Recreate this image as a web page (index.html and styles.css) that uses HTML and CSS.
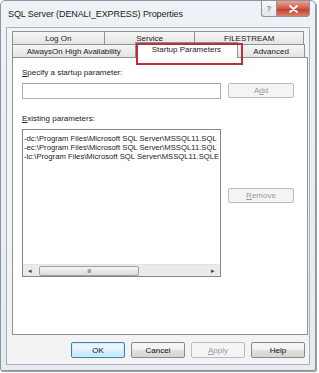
FILE: index.html
```html
<!DOCTYPE html>
<html>
<head>
<meta charset="utf-8">
<link rel="stylesheet" href="styles.css">
</head>
<body>
<div class="window">
  <div class="titlebar">
    <span class="title">SQL Server (DENALI_EXPRESS) Properties</span>
    <div class="caption-btns">
      <div class="cbtn help">?</div>
      <div class="cbtn close">
        <svg width="9" height="8" viewBox="0 0 9 8"><path d="M1 1 L8 7 M8 1 L1 7" stroke="#fff" stroke-width="1.8" stroke-linecap="round"/></svg>
      </div>
    </div>
  </div>
  <div class="client">
    <div class="tabs">
      <div class="tabrow row1">
        <div class="tab t-logon">Log On</div>
        <div class="tab t-service">Service</div>
        <div class="tab t-fs">FILESTREAM</div>
      </div>
      <div class="tabrow row2">
        <div class="tab t-always">AlwaysOn High Availability</div>
        <div class="tab t-startup active">Startup Parameters</div>
        <div class="tab t-adv">Advanced</div>
      </div>
      <div class="highlight"></div>
    </div>
    <div class="panel">
      <div class="label"><u>S</u>pecify a startup parameter:</div>
      <div class="row">
        <div class="input"></div>
        <div class="btn disabled"><span>A<u>d</u>d</span></div>
      </div>
      <div class="label label2"><u>E</u>xisting parameters:</div>
      <div class="row row-list">
        <div class="listbox">
          <div class="items">
            <div>-dc:\Program Files\Microsoft SQL Server\MSSQL11.SQL</div>
            <div>-ec:\Program Files\Microsoft SQL Server\MSSQL11.SQL</div>
            <div>-lc:\Program Files\Microsoft SQL Server\MSSQL11.SQLE</div>
          </div>
          <div class="hscroll">
            <div class="arrow">&#9666;</div>
            <div class="track"><div class="thumb">III</div></div>
            <div class="arrow">&#9656;</div>
          </div>
        </div>
        <div class="side">
          <div class="btn disabled"><span><u>R</u>emove</span></div>
        </div>
      </div>
    </div>
    <div class="footer">
      <div class="btn default">OK</div>
      <div class="btn">Cancel</div>
      <div class="btn disabled"><span><u>A</u>pply</span></div>
      <div class="btn">Help</div>
    </div>
  </div>
</div>
</body>
</html>
```

FILE: styles.css
```css
* { box-sizing: border-box; }
html, body { margin: 0; padding: 0; background: #ffffff; }
body {
  width: 319px; height: 373px; overflow: hidden;
  font-family: "Liberation Sans", Arial, sans-serif;
  font-size: 8px; color: #1a1a1a;
}
.window {
  width: 316px; height: 371px;
  border: 1px solid #8d959e;
  border-radius: 5px 5px 2px 2px;
  background: linear-gradient(#eef2f6, #e6ebf0);
  display: flex; flex-direction: column;
  padding: 0 5px 5px 5px;
  box-shadow: 1px 1px 0 #9aa0a6;
}
.titlebar {
  height: 26px;
  display: flex; align-items: flex-start; justify-content: space-between;
}
.title { font-size: 9px; color: #222; margin-top: 8px; margin-left: 2px; letter-spacing: -0.1px; }
.caption-btns { display: flex; margin-top: -1px; }
.cbtn {
  height: 17px; display: flex; align-items: center; justify-content: center;
  border: 1px solid #8a939e;
}
.help {
  width: 15px; border-radius: 0 0 0 3px; border-right: none;
  background: linear-gradient(#f5f7f9, #e2e7ed);
  color: #777; font-size: 8px; font-weight: bold;
}
.close {
  width: 34px; border-radius: 0 0 3px 0;
  background: linear-gradient(#e8a493, #cf5b44 50%, #c1402b 55%, #d8806a);
}
.client {
  flex: 1;
  background: #f3f3f3;
  border: 1px solid #a7b0ba;
  padding: 3px 4px 6px 5px;
  display: flex; flex-direction: column;
}
.tabs { position: relative; display: flex; flex-direction: column; }
.tabrow { display: flex; height: 13px; }
.row1 { margin-right: 1px; }
.tab {
  border: 1px solid #8e939b; border-bottom: none; border-right: none;
  background: linear-gradient(#f6f6f6, #e3e3e3);
  display: flex; align-items: center; justify-content: center;
  font-size: 8px; white-space: nowrap; color: #222;
}
.tab:last-child { border-right: 1px solid #8e939b; }
.t-logon { width: 92px; }
.t-service { width: 91px; }
.t-fs { width: 110px; }
.t-always { width: 123px; }
.t-startup { width: 104px; }
.t-adv { width: 67px; }
.tab.active {
  background: #fff; margin-top: -2px; height: 16px; margin-bottom: -1px;
  border-right: 1px solid #8e939b; align-items: flex-start; padding-top: 2px;
  position: relative; z-index: 2;
}
.tab.active + .tab { border-left: none; }
.highlight {
  position: absolute; left: 124px; top: 12px; width: 107px; height: 22px;
  border: 2px solid #b8303c; z-index: 3;
}
.panel {
  flex: 1;
  background: #fff;
  border: 1px solid #8e939b;
  padding: 10px 0 0 9px;
  display: flex; flex-direction: column;
  width: 296px;
}
.label { height: 10px; line-height: 10px; color: #222; }
.label2 { margin-top: 15px; }
.row { display: flex; margin-top: 5px; }
.input {
  width: 199px; height: 16px;
  border: 1px solid #abadb3; border-top-color: #a0a3aa;
  background: #fff;
}
.btn {
  width: 66px; height: 15px;
  border: 1px solid #8a8a8a; border-radius: 2px;
  background: linear-gradient(#f4f4f4 45%, #e0e0e0 50%, #d6d6d6);
  display: flex; align-items: center; justify-content: center;
  font-size: 8px; color: #111;
}
.row .btn { margin-left: 7px; }
.btn.disabled { background: #f4f4f4; border-color: #b8bcc1; color: #9a9a9a; }
.row-list { margin-top: 5px; }
.listbox {
  width: 199px; height: 148px;
  border: 1px solid #828790;
  display: flex; flex-direction: column; overflow: hidden;
}
.items { flex: 1; padding: 4px 0 0 1px; line-height: 9px; white-space: nowrap; overflow: hidden; font-size: 7.7px; color: #222; }
.hscroll {
  height: 12px; display: flex; align-items: center;
  background: #eaeaea; border-top: 1px solid #e2e2e2;
}
.arrow { width: 14px; text-align: center; font-size: 7px; color: #444; }
.track { flex: 1; display: flex; height: 10px; }
.thumb {
  width: 100px; height: 10px; margin-left: 2px;
  border: 1px solid #9aa0a6; border-radius: 2px;
  background: linear-gradient(#f4f4f4, #dcdcdc);
  display: flex; align-items: center; justify-content: center;
  font-size: 6px; color: #555; letter-spacing: -0.5px;
}
.side { display: flex; flex-direction: column; padding-top: 59px; }
.footer {
  display: flex; justify-content: flex-end; gap: 6px;
  padding-top: 7px;
}
.footer .btn { width: 54px; height: 16px; }
.footer .btn.default { border-color: #3c7fb1; background: linear-gradient(#eaf6fd 45%, #d9f0fc 50%, #bee6fd); box-shadow: inset 0 0 0 1px #cdeefb; }
u { text-decoration: underline; }
```
